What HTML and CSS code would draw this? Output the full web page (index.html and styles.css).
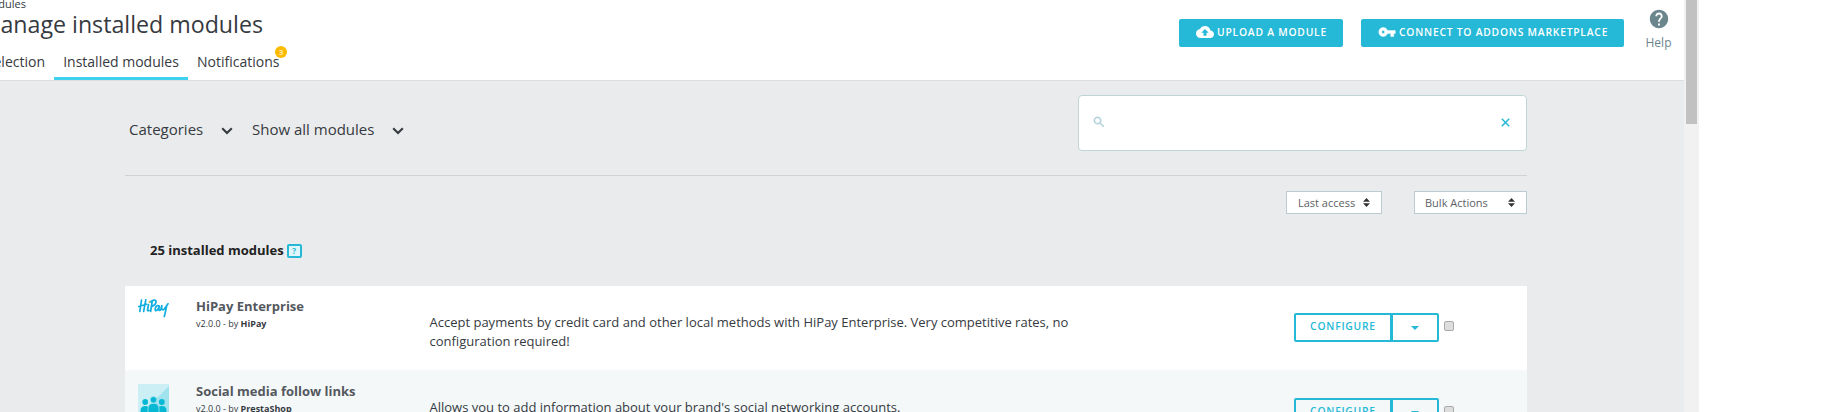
FILE: index.html
```
<!DOCTYPE html>
<html lang="en">
<head>
<meta charset="utf-8">
<title>Manage installed modules</title>
<link rel="stylesheet" href="styles.css">
</head>
<body>
<div class="app">
  <div class="page">
    <header class="header">
      <div class="heading">
        <div class="crumb"><span>Modules</span></div>
        <h1 class="title"><span>Manage installed modules</span></h1>
        <nav class="tabs">
          <div class="tab tab-first"><span>Selection</span></div>
          <div class="tab tab-active"><span>Installed modules</span></div>
          <div class="tab tab-notif"><span>Notifications</span><i class="badge">3</i></div>
        </nav>
      </div>
      <div class="actions">
        <button class="btn btn-upload"><svg width="18" height="18" viewBox="0 0 24 24"><path fill="#fff" d="M19.35 10.04C18.67 6.59 15.64 4 12 4 9.11 4 6.6 5.64 5.35 8.04 2.34 8.36 0 10.91 0 14c0 3.31 2.69 6 6 6h13c2.76 0 5-2.24 5-5 0-2.64-2.05-4.78-4.65-4.96zM14 13v4h-4v-4H7l5-5 5 5h-3z"/></svg><span>UPLOAD A MODULE</span></button>
        <button class="btn btn-connect"><svg width="18" height="18" viewBox="0 0 24 24"><path fill="#fff" stroke="#fff" stroke-width=".6" d="M12.65 10C11.83 7.67 9.61 6 7 6c-3.31 0-6 2.69-6 6s2.69 6 6 6c2.61 0 4.83-1.67 5.65-4H17v4h4v-4h2v-4H12.65zM7 14c-1.1 0-2-.9-2-2s.9-2 2-2 2 .9 2 2-.9 2-2 2z"/></svg><span>CONNECT TO ADDONS MARKETPLACE</span></button>
        <div class="help"><svg width="22" height="22" viewBox="0 0 24 24"><path fill="#6c868e" d="M12 2C6.48 2 2 6.48 2 12s4.480 10 10 10 10-4.480 10-10S17.520 2 12 2zm1 17h-2v-2h2v2zm2.070-7.750l-.9.920C13.450 12.900 13 13.500 13 15h-2v-.5c0-1.100.450-2.100 1.170-2.830l1.240-1.260c.370-.360.590-.860.590-1.410 0-1.100-.9-2-2-2s-2 .9-2 2H8c0-2.210 1.790-4 4-4s4 1.790 4 4c0 .880-.360 1.680-.930 2.250z"/></svg><span>Help</span></div>
      </div>
    </header>
    <main class="main">
      <section class="filters">
        <div class="dropdowns">
          <span class="dd dd-cat">Categories</span>
          <svg class="chev" width="12" height="8" viewBox="0 0 12 8"><path d="M1.200 1.200 6 6l4.800-4.800" fill="none" stroke="#363a41" stroke-width="2.100"/></svg>
          <span class="dd dd-all">Show all modules</span>
          <svg class="chev" width="12" height="8" viewBox="0 0 12 8"><path d="M1.200 1.200 6 6l4.800-4.800" fill="none" stroke="#363a41" stroke-width="2.100"/></svg>
        </div>
        <div class="search">
          <svg width="14" height="14" viewBox="0 0 24 24"><path fill="#b5d2da" stroke="#b5d2da" stroke-width=".8" d="M15.500 14h-.79l-.28-.27C15.410 12.590 16 11.110 16 9.500 16 5.910 13.090 3 9.500 3S3 5.910 3 9.500 5.910 16 9.500 16c1.610 0 3.090-.59 4.230-1.570l.27.28v.79l5 4.990L20.490 19l-4.990-5zm-6 0C7.010 14 5 11.990 5 9.500S7.010 5 9.500 5 14 7.010 14 9.500 11.990 14 9.500 14z"/></svg>
          <svg width="9" height="9" viewBox="0 0 9 9"><path d="M.8.8l7.400 7.400M8.200.8.8 8.200" stroke="#25b9d7" stroke-width="1.500"/></svg>
        </div>
      </section>
      <div class="sorting">
        <div class="select select-last"><span>Last access</span><svg width="7" height="9" viewBox="0 0 7 9"><path d="M3.500 0 7 3.700H0zM3.500 9 0 5.300h7z" fill="#333"/></svg></div>
        <div class="select select-bulk"><span>Bulk Actions</span><svg width="7" height="9" viewBox="0 0 7 9"><path d="M3.500 0 7 3.700H0zM3.500 9 0 5.300h7z" fill="#333"/></svg></div>
      </div>
      <div class="count"><span>25 installed modules</span><i class="hint">?</i></div>
      <section class="list">
        <article class="row">
          <svg class="logo" width="31" height="31" viewBox="0 0 31 31"><g fill="none" stroke="#12aee0" stroke-width="1.700" stroke-linecap="round" stroke-linejoin="round"><path d="M3.500 1 1.800 12.500M7.800.8 5.600 12.500M.8 7.500 8.600 5.200M10.500 5.500 9.500 11q.2 1.300 1.500.4M14.200 2.500 12.600 12.500M12 3.200Q16.500-.3 18 2.200 18.300 5.800 13.800 7.400M21.200 7Q18.800 5.400 17.300 9.200 16.800 12.600 19 11.300 20.600 10 21.300 7L20.800 10.500Q21.200 12.300 22.800 10.600L23.800 6.500 23.700 9.500Q24.800 12.200 26.500 9.800L30 4.800M28.700 6.500Q27.800 12 26.300 17.500"/></g><circle cx="11.400" cy="2.700" r=".9" fill="#f5b544"/></svg>
          <div class="info"><h2 class="name">HiPay Enterprise</h2><p class="ver">v2.0.0 - by <b>HiPay</b></p></div>
          <p class="desc">Accept payments by credit card and other local methods with HiPay Enterprise. Very competitive rates, no<br>configuration required!</p>
          <div class="ops"><div class="conf"><span>CONFIGURE</span></div><div class="caret"><svg width="8" height="4" viewBox="0 0 8 4"><path d="M0 0h8L4 4z" fill="#25b9d7"/></svg></div><div class="check"></div></div>
        </article>
        <article class="row row-alt">
          <svg class="logo" width="31" height="31" viewBox="0 0 31 31"><path fill="#cceff6" d="M0 0h31v31H0z"/><path fill="#a0e3ee" d="M31 2v29H2z"/><g fill="#06b8d4"><circle cx="7.200" cy="18" r="2.900"/><circle cx="23.800" cy="18" r="2.900"/><path d="M2.500 31v-4.500q0-4.500 4.700-4.500t4.700 4.500V31zM19.100 31v-4.500q0-4.500 4.700-4.500t4.700 4.500V31z"/></g><g fill="#06b8d4" stroke="#b8e9f2" stroke-width=".7"><path d="M10 31v-6q0-5.700 5.500-5.700T21 25v6z"/><circle cx="15.500" cy="15.800" r="3.300"/></g></svg>
          <div class="info"><h2 class="name">Social media follow links</h2><p class="ver">v2.0.0 - by <b>PrestaShop</b></p></div>
          <p class="desc">Allows you to add information about your brand's social networking accounts.</p>
          <div class="ops"><div class="conf"><span>CONFIGURE</span></div><div class="caret"><svg width="8" height="4" viewBox="0 0 8 4"><path d="M0 0h8L4 4z" fill="#25b9d7"/></svg></div><div class="check"></div></div>
        </article>
      </section>
    </main>
  </div>
  <div class="scroll"><div class="thumb"></div></div>
</div>
</body>
</html>
```
FILE: styles.css
```
* { box-sizing: border-box; }
body { margin: 0; background: #fff; color: #363a41; font-family: "Open Sans", sans-serif; overflow: hidden; }
h1, h2, p { margin: 0; }
i { font-style: normal; }
svg { display: block; flex: none; }
span { white-space: nowrap; }
.app { display: flex; height: 412px; overflow: hidden; }
.page { width: 1684px; height: 412px; overflow: hidden; background: #eaebec; }
.scroll { width: 15px; background: #f1f1f1; padding: 0 2px; }
.thumb { height: 124px; background: #c1c1c1; }

.header { display: flex; justify-content: space-between; height: 81px; background: #fff; border-bottom: 1px solid #dcdfe1; }
.heading { width: 420px; overflow: hidden; }
.crumb { display: flex; justify-content: flex-end; width: 26px; height: 9px; font-size: 11px; line-height: 8px; }
.title { display: flex; justify-content: flex-end; width: 263px; height: 34px; font-size: 23.2px; font-weight: 400; line-height: 30px; }
.tabs { display: flex; height: 37px; font-size: 14px; line-height: 37px; }
.tab { display: flex; height: 37px; }
.tab-first { width: 54px; padding-right: 9px; justify-content: flex-end; }
.tab-active { width: 134px; justify-content: center; border-bottom: 3px solid #3ed2f0; }
.tab-notif { position: relative; padding-left: 9px; }
.badge { position: absolute; left: 87px; top: 3px; width: 12px; height: 12px; border-radius: 50%; background: #fbbb00; color: #fff; font-size: 8px; line-height: 12px; text-align: center; }

.actions { display: flex; align-items: flex-start; padding: 19px 12px 0 0; }
.btn { display: flex; align-items: center; height: 28px; padding: 0 0 2px; border: 0; border-radius: 2px; background: #25b9d7; color: #fff; font: 600 10.3px/26px "Open Sans", sans-serif; letter-spacing: .78px; gap: 3px; }
.btn-upload { width: 164px; margin-right: 18px; padding-left: 17px; }
.btn-connect { width: 263px; margin-right: 21px; padding-left: 17px; }
.help { display: flex; flex-direction: column; align-items: center; width: 27px; margin-top: -11px; color: #6c868e; font-size: 12px; line-height: 20px; gap: 3px; }

.main { padding: 14px 157px 0 125px; }
.filters { display: flex; justify-content: space-between; height: 81px; border-bottom: 1px solid #d0d2d3; }
.dropdowns { display: flex; align-items: center; height: 68px; padding-left: 4px; font-size: 15px; }
.dd-cat { width: 92px; }
.dd-all { width: 140px; margin-left: 19px; }
.chev { margin-top: 4px; }
.search { display: flex; justify-content: space-between; align-items: center; width: 449px; height: 56px; padding: 0 16px 2px 13px; background: #fff; border: 1px solid #bfd5d6; border-radius: 4px; }

.sorting { display: flex; justify-content: flex-end; gap: 32px; padding-top: 15px; }
.select { display: flex; align-items: center; justify-content: space-between; height: 23px; padding: 0 11px; background: #fff; border: 1px solid #bbcdd2; color: #5b5f66; font-size: 11px; }
.select-last { width: 96px; }
.select-bulk { width: 113px; padding-left: 10px; }
.count { display: flex; align-items: center; gap: 3px; height: 72px; padding-left: 25px; color: #222; font-size: 13px; font-weight: 700; }
.hint { width: 15px; height: 14px; margin-top: 1px; border: 2px solid #25b9d7; border-radius: 2px; background: #e0f6fb; color: #25b9d7; font-size: 8px; line-height: 10px; text-align: center; }

.row { display: grid; grid-template-columns: 58px 233.5px 740.5px 1fr; height: 84px; padding: 13px 0 0 13px; background: #fff; }
.row-alt { height: 85px; padding-top: 14px; background: #f4f8f9; }
.info { margin-top: -1px; white-space: nowrap; }
.name { color: #54585e; font-size: 13px; font-weight: 700; line-height: 17px; }
.ver { margin-top: 2px; font-size: 9px; line-height: 13px; }
.desc { padding: 14px 0 0; font-size: 13px; line-height: 19px; }
.ops { display: flex; padding-top: 14px; margin-left: 124px; }
.conf { display: flex; width: 98px; height: 29px; border: 2px solid #25b9d7; border-radius: 2px 0 0 2px; justify-content: center; color: #25b9d7; font-size: 10.3px; font-weight: 600; line-height: 22px; letter-spacing: .78px; }
.caret { display: flex; width: 47px; height: 29px; border: 2px solid #25b9d7; border-left-width: 1px; border-radius: 0 2px 2px 0; justify-content: center; align-items: center; }
.check { width: 10px; height: 10px; margin: 8px 0 0 5px; border: 1px solid #aaa; border-radius: 2px; background: #ddd; }
```
